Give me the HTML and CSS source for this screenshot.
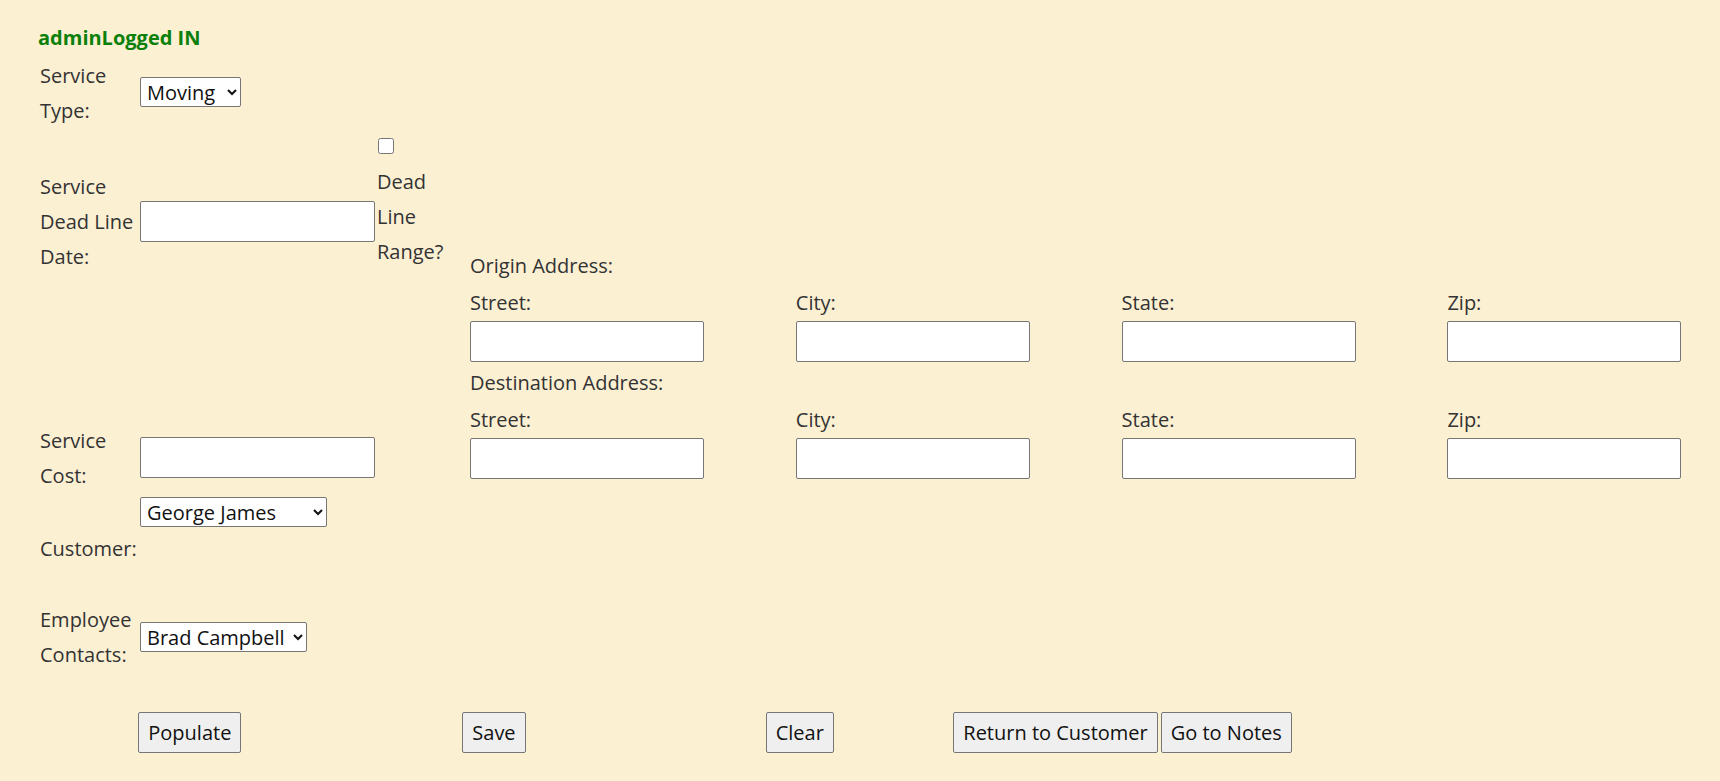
FILE: index.html
```html
<!DOCTYPE html>
<html lang="en">
<head>
<meta charset="utf-8">
<title>Service</title>
<link rel="stylesheet" href="styles.css">
</head>
<body>
<main class="page">
  <h3 class="status">adminLogged IN</h3>
  <form class="service-form">
    <label class="lbl type-lbl">Service Type:</label>
    <div class="type-ctl"><select class="sel sel-type"><option>Moving</option></select></div>

    <label class="lbl dl-lbl">Service Dead Line Date:</label>
    <input class="txt dl-input" type="text">
    <div class="range-cell">
      <div class="chk-line"><input class="chk" type="checkbox"></div>
      <label class="range-lbl">Dead Line Range?</label>
    </div>

    <div class="addr">
      <div class="addr-title">Origin Address:</div>
      <div class="addr-lbl">Street:</div>
      <div class="addr-lbl">City:</div>
      <div class="addr-lbl">State:</div>
      <div class="addr-lbl">Zip:</div>
      <input class="txt addr-in" type="text">
      <input class="txt addr-in" type="text">
      <input class="txt addr-in" type="text">
      <input class="txt addr-in" type="text">
      <div class="addr-title second">Destination Address:</div>
      <div class="addr-lbl">Street:</div>
      <div class="addr-lbl">City:</div>
      <div class="addr-lbl">State:</div>
      <div class="addr-lbl">Zip:</div>
      <input class="txt addr-in" type="text">
      <input class="txt addr-in" type="text">
      <input class="txt addr-in" type="text">
      <input class="txt addr-in" type="text">
    </div>

    <label class="lbl cost-lbl">Service Cost:</label>
    <input class="txt cost-input" type="text">

    <label class="lbl cust-lbl">Customer:</label>
    <div class="cust-ctl"><select class="sel sel-cust"><option>George James</option></select></div>

    <label class="lbl emp-lbl">Employee Contacts:</label>
    <div class="emp-ctl"><select class="sel sel-emp"><option>Brad Campbell</option></select></div>
  </form>

  <div class="actions">
    <div><button class="btn" type="button">Populate</button></div>
    <div><button class="btn" type="button">Save</button></div>
    <div><button class="btn" type="button">Clear</button></div>
    <div class="btn-pair"><button class="btn" type="button">Return to Customer</button><button class="btn" type="button">Go to Notes</button></div>
  </div>
</main>
</body>
</html>
```

FILE: styles.css
```css
html, body {
  margin: 0;
  background: #fcf0d3;
}

body {
  font-family: "Open Sans", "Noto Sans", sans-serif;
  font-size: 20px;
  color: #333;
}

.page {
  padding: 25px 0 20px 38px;
}

.status {
  margin: 0;
  font-size: 20px;
  line-height: 25.5px;
  font-weight: 700;
  color: #0b800b;
}

.service-form {
  display: grid;
  grid-template-columns: 100px 237px 93px 1fr;
  row-gap: 2px;
  align-items: start;
  margin: 7px 0 0 2px;
}

.lbl, .range-lbl, .addr-title, .addr-lbl {
  line-height: 35px;
}

/* row 1 */
.type-lbl { grid-row: 1; grid-column: 1; }
.type-ctl { grid-row: 1; grid-column: 2; margin-top: 19px; }

/* row 2 */
.dl-lbl { grid-row: 2; grid-column: 1; margin-top: 39px; }
.dl-input { grid-row: 2; grid-column: 2; margin-top: 71px; width: 235px; }
.range-cell { grid-row: 2; grid-column: 3; }
.chk-line {
  box-sizing: border-box;
  height: 34px;
  padding: 8px 0 0 1px;
}
.chk {
  display: block;
  width: 16px;
  height: 16px;
  margin: 0;
}
.range-lbl { display: block; width: 70px; }

.addr {
  grid-row: 2 / span 2;
  grid-column: 4;
  margin-top: 118px;
  display: grid;
  grid-template-columns: repeat(3, 325.8px) 234px;
  align-items: start;
}
.addr-title { grid-column: 1 / -1; }
.addr-title.second { margin-top: 3px; }
.addr-lbl { margin-top: 2px; }
.addr-in { width: 234px; margin-top: 1px; }

/* row 3 */
.cost-lbl { grid-row: 3; grid-column: 1; margin-top: 147px; }
.cost-input { grid-row: 3; grid-column: 2; margin-top: 161px; width: 235px; }

/* row 4 */
.cust-lbl { grid-row: 4; grid-column: 1; margin-top: 36px; }
.cust-ctl { grid-row: 4; grid-column: 2; margin-top: 2px; }

/* row 5 */
.emp-lbl { grid-row: 5; grid-column: 1; margin-top: 34px; }
.emp-ctl { grid-row: 5; grid-column: 2; margin-top: 54px; }

.txt {
  box-sizing: border-box;
  height: 41px;
  border: 1px solid #767676;
  border-radius: 2px;
  background: #fff;
  font: inherit;
  padding: 0 4px;
}

.sel {
  box-sizing: border-box;
  height: 30px;
  font-family: "Open Sans", "Noto Sans", sans-serif;
  font-size: 20px;
  color: #111;
  background: #fff;
  border: 1px solid #767676;
  border-radius: 2px;
  padding: 0 2px 0 2px;
  display: block;
}
.sel-type { width: 101px; }
.sel-cust { width: 187px; }
.sel-emp { width: 167px; }

.actions {
  display: grid;
  grid-template-columns: 324px 303.4px 187.6px auto;
  align-items: start;
  margin: 40px 0 0 100.3px;
}
.btn-pair {
  display: flex;
  gap: 3px;
}
.btn {
  box-sizing: border-box;
  height: 41px;
  font-family: "Open Sans", "Noto Sans", sans-serif;
  font-size: 20px;
  line-height: 27px;
  color: #111;
  padding: 6px 9px;
  border: 1px solid #767676;
  border-radius: 2px;
  background: #efefef;
}
```
